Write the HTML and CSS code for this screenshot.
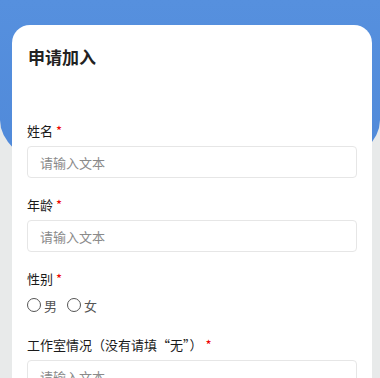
FILE: index.html
```html
<!DOCTYPE html>
<html lang="zh-CN">
<head>
    <meta charset="UTF-8">
    <meta name="viewport" content="width=device-width, initial-scale=1.0">
    <title>申请加入</title>
    <link rel="stylesheet" href="styles.css">
</head>
<body>
    <div class="header-bg"></div>

    <div class="card">
        <h1>申请加入</h1>

        <div class="form-group">
            <label>姓名 <span class="req">*</span></label>
            <input type="text" placeholder="请输入文本">
        </div>

        <div class="form-group">
            <label>年龄 <span class="req">*</span></label>
            <input type="text" placeholder="请输入文本">
        </div>

        <div class="form-group">
            <label>性别 <span class="req">*</span></label>
            <div class="radio-group">
                <label class="radio"><span class="circle"></span>男</label>
                <label class="radio"><span class="circle"></span>女</label>
            </div>
        </div>

        <div class="form-group">
            <label>工作室情况（没有请填“无”） <span class="req">*</span></label>
            <input type="text" placeholder="请输入文本">
        </div>
    </div>
</body>
</html>
```

FILE: styles.css
```css
body {
    margin: 0;
    background-color: #e8eaea;
    font-family: "Noto Sans CJK SC", "Noto Sans", sans-serif;
    color: #222;
    overflow: hidden;
    height: 378px;
}

/* синий фон сверху */
.header-bg {
    position: absolute;
    top: 0;
    left: 0;
    width: 380px;
    height: 197px;
    background: linear-gradient(#5690de, #4f88d8);
    border-radius: 0 0 190px 190px / 0 0 77px 77px;
    z-index: 0;
}

.card {
    position: relative;
    z-index: 1;
    margin: 25px 8px 0 12px;
    background: white;
    border-radius: 18px;
    padding: 19px 15px 20px 15px;
    min-height: 400px;
}

h1 {
    margin: 0 0 52px 1px;
    font-size: 17px;
    font-weight: 700;
    line-height: 25px;
    color: #222;
}

.form-group {
    margin-bottom: 17px;
}

.form-group > label {
    display: block;
    font-size: 13px;
    line-height: 20px;
    margin-bottom: 5px;
    color: #1a1a1a;
}

.req {
    color: #e00;
    font-size: 13px;
}

input {
    display: block;
    box-sizing: border-box;
    width: 100%;
    height: 32px;
    padding: 0 12px;
    border: 1px solid #e6e6e6;
    border-radius: 4px;
    font-family: inherit;
    font-size: 13px;
    color: #333;
}

input::placeholder {
    color: #8a8a8a;
}

.radio-group {
    display: flex;
    gap: 10px;
    height: 18px;
    padding-top: 2px;
    padding-bottom: 4px;
    align-items: center;
}

.radio {
    display: flex;
    align-items: center;
    font-size: 13px;
    color: #555;
}

.circle {
    width: 12px;
    height: 12px;
    border: 1px solid #555;
    border-radius: 50%;
    margin-right: 3px;
}
```
